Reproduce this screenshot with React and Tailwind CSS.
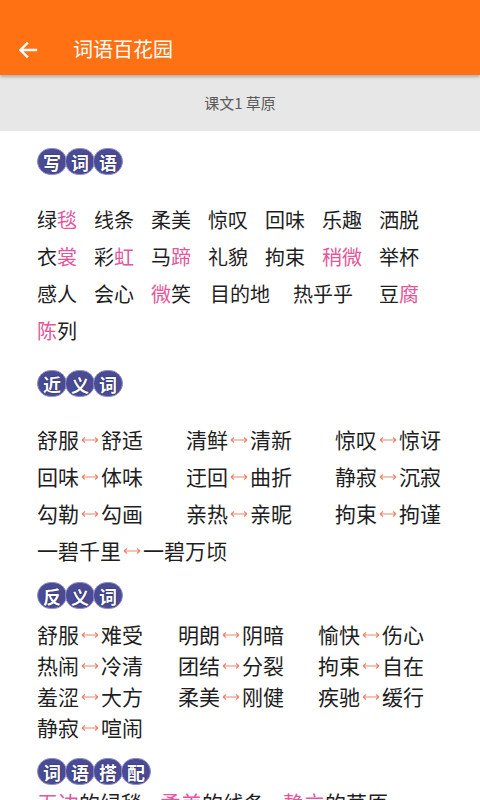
import React from 'react';

const PINK = 'text-[#e4569a]';

// 写词语: each word is a list of [text, pink?] parts with its column width
const xieCiYu = [
  [
    [[['绿'], ['毯', 1]], 57],
    [[['线条']], 57],
    [[['柔美']], 57],
    [[['惊叹']], 57],
    [[['回味']], 57],
    [[['乐趣']], 57],
    [[['洒脱']], 57],
  ],
  [
    [[['衣'], ['裳', 1]], 57],
    [[['彩'], ['虹', 1]], 57],
    [[['马'], ['蹄', 1]], 57],
    [[['礼貌']], 57],
    [[['拘束']], 57],
    [[['稍微', 1]], 57],
    [[['举杯']], 57],
  ],
  [
    [[['感人']], 57],
    [[['会心']], 57],
    [[['微', 1], ['笑']], 59],
    [[['目的地']], 83],
    [[['热乎乎']], 86],
    [[['豆'], ['腐', 1]], 57],
  ],
  [[[['陈', 1], ['列']], 57]],
];

const jinYiCi = [
  [['舒服', '舒适'], ['清鲜', '清新'], ['惊叹', '惊讶']],
  [['回味', '体味'], ['迂回', '曲折'], ['静寂', '沉寂']],
  [['勾勒', '勾画'], ['亲热', '亲昵'], ['拘束', '拘谨']],
  [['一碧千里', '一碧万顷']],
];

const fanYiCi = [
  [['舒服', '难受'], ['明朗', '阴暗'], ['愉快', '伤心']],
  [['热闹', '冷清'], ['团结', '分裂'], ['拘束', '自在']],
  [['羞涩', '大方'], ['柔美', '刚健'], ['疾驰', '缓行']],
  [['静寂', '喧闹']],
];

function Badge({ text }) {
  return (
    <div className="flex pl-[37px]">
      {text.split('').map((c, i) => (
        <span
          key={i}
          className={`w-[30px] h-[27px] rounded-full bg-[#4a4b94] border border-[#8e90c8] flex items-center justify-center text-white text-[18px] font-bold leading-none ${i > 0 ? '-ml-[2px]' : ''}`}
          style={{ textShadow: '0 0 1px #1d1e55, 0 0 1px #1d1e55' }}
        >
          {c}
        </span>
      ))}
    </div>
  );
}

function Arrow() {
  return (
    <svg width="20" height="10" viewBox="0 0 20 10" className="mx-[1px] shrink-0">
      <path d="M2 5H18M2 5L5 2.5M2 5L5 7.5M18 5L15 2.5M18 5L15 7.5" stroke="#e9876e" strokeWidth="1.2" fill="none" />
    </svg>
  );
}

function PairRows({ rows, cols, rowH, size }) {
  return (
    <div className="pl-[37px]">
      {rows.map((row, ri) => (
        <div key={ri} className="flex items-center whitespace-nowrap" style={{ height: rowH }}>
          {row.map(([a, b], ci) => (
            <div key={ci} className="flex items-center shrink-0" style={{ width: row.length > 1 ? cols[ci] : 'auto' }}>
              <span className={size}>{a}</span>
              <Arrow />
              <span className={size}>{b}</span>
            </div>
          ))}
        </div>
      ))}
    </div>
  );
}

export default function App() {
  return (
    <div className="w-[480px] h-[800px] overflow-hidden bg-white text-[#1e1e1e]" style={{ fontFamily: '"Noto Sans CJK SC", "Noto Sans", sans-serif' }}>
      {/* 顶部栏 */}
      <div className="h-[75px] pt-[24px] bg-[#ff7112] flex items-center relative z-10 shadow-[0_2px_3px_rgba(0,0,0,0.25)]">
        <svg width="24" height="24" viewBox="0 0 24 24" className="ml-[16px]">
          <path d="M20 12H5M11 5.5L4.5 12L11 18.5" stroke="white" strokeWidth="2.4" fill="none" strokeLinecap="square" />
        </svg>
        <span className="ml-[33px] text-white text-[20px] mt-[-2px]">词语百花园</span>
      </div>
      {/* 课文标题 */}
      <div className="h-[56px] bg-[#e7e7e7] flex items-center justify-center text-[#5a5a5a] text-[15px]">
        课文1 草原
      </div>

      <div className="pt-[17px]">
        <Badge text="写词语" />
        <div className="pl-[37px] mt-[26px]">
          {xieCiYu.map((row, ri) => (
            <div key={ri} className="flex items-center h-[37px]">
              {row.map(([parts, w], wi) => (
                <span key={wi} className="text-[20px] shrink-0" style={{ width: w }}>
                  {parts.map(([t, p], pi) => (
                    <span key={pi} className={p ? PINK : ''}>{t}</span>
                  ))}
                </span>
              ))}
            </div>
          ))}
        </div>

        <div className="mt-[21px]">
          <Badge text="近义词" />
        </div>
        <div className="mt-[24px]">
          <PairRows rows={jinYiCi} cols={[149, 149, 149]} rowH={37} size="text-[21px]" />
        </div>

        <div className="mt-[13px]">
          <Badge text="反义词" />
        </div>
        <div className="mt-[10px]">
          <PairRows rows={fanYiCi} cols={[141, 140, 140]} rowH={31} size="text-[21px]" />
        </div>

        <div className="mt-[15px]">
          <Badge text="词语搭配" />
        </div>
        <div className="pl-[37px] mt-[2px] text-[21px] whitespace-nowrap">
          <span className={PINK}>无边</span>的绿毯
          <span className={`${PINK} ml-[18px]`}>柔美</span>的线条
          <span className={`${PINK} ml-[18px]`}>静立</span>的草原
        </div>
      </div>
    </div>
  );
}
